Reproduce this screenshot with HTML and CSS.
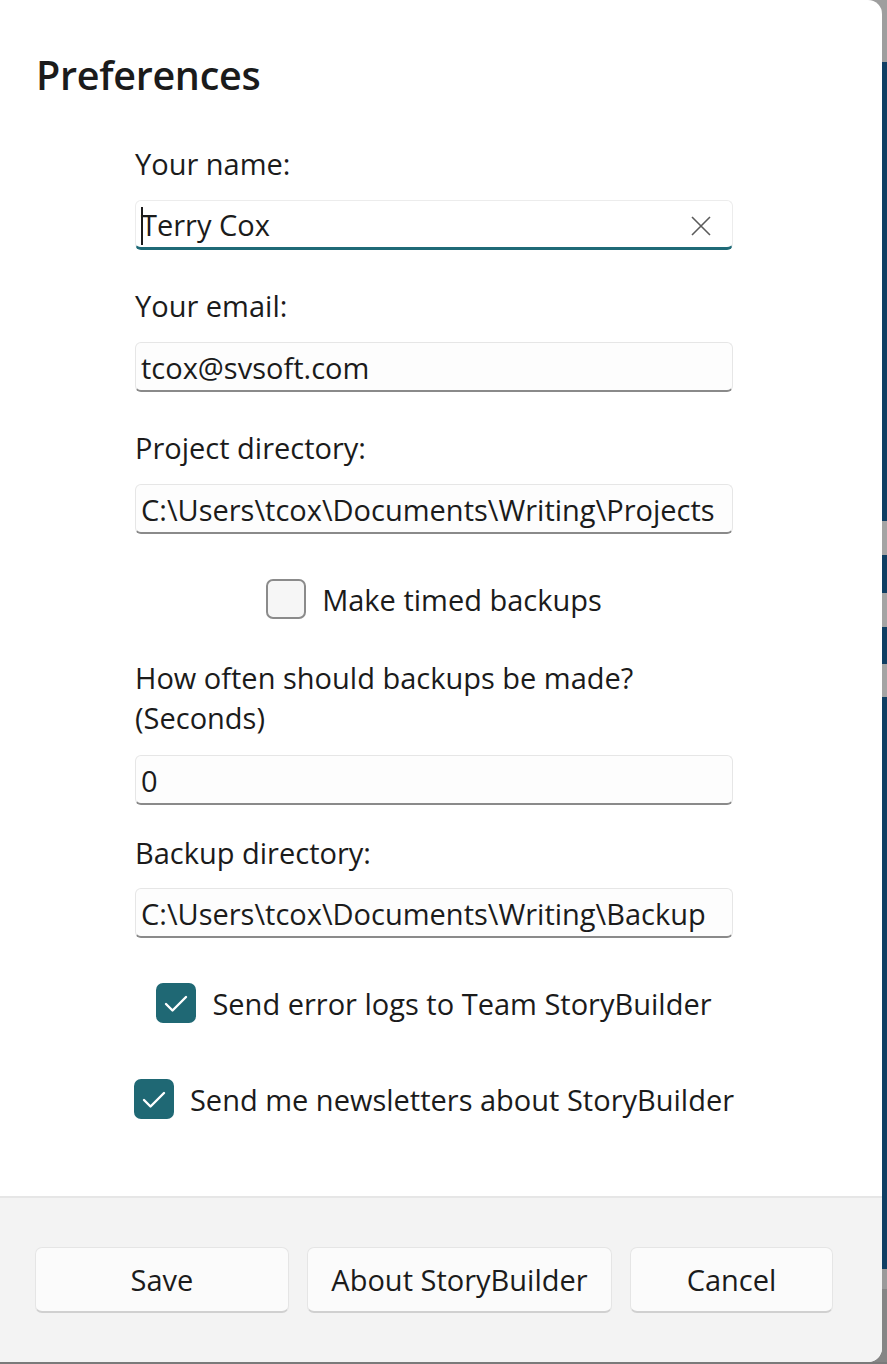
FILE: index.html
```html
<!DOCTYPE html>
<html lang="en">
<head>
<meta charset="utf-8">
<title>Preferences</title>
<link rel="stylesheet" href="styles.css">
</head>
<body>
<div class="screen">
  <div class="dialog">
    <div class="content">
      <h1 class="title">Preferences</h1>
      <div class="form">
        <label class="label l-name">Your name:</label>
        <div class="textbox focused">
          <span class="caret"></span><span class="value">Terry Cox</span>
          <svg class="clear" width="22" height="22" viewBox="0 0 22 22"><path d="M2 2 L20 20 M20 2 L2 20" stroke="#5b5b5b" stroke-width="1.6" fill="none"/></svg>
        </div>
        <label class="label l-gap">Your email:</label>
        <div class="textbox"><span class="value">tcox@svsoft.com</span></div>
        <label class="label l-gap">Project directory:</label>
        <div class="textbox"><span class="value">C:\Users\tcox\Documents\Writing\Projects</span></div>
        <div class="check-row cr-backup">
          <span class="checkbox"></span><span class="check-text">Make timed backups</span>
        </div>
        <label class="label l-often">How often should backups be made?<br>(Seconds)</label>
        <div class="textbox"><span class="value">0</span></div>
        <label class="label l-backup">Backup directory:</label>
        <div class="textbox"><span class="value">C:\Users\tcox\Documents\Writing\Backup</span></div>
        <div class="check-row cr-logs">
          <span class="checkbox checked"><svg width="40" height="40" viewBox="0 0 40 40"><path d="M10 21 L16.5 27.5 L30 14" stroke="#fff" stroke-width="2.4" fill="none" stroke-linecap="round" stroke-linejoin="round"/></svg></span><span class="check-text">Send error logs to Team StoryBuilder</span>
        </div>
        <div class="check-row cr-news">
          <span class="checkbox checked"><svg width="40" height="40" viewBox="0 0 40 40"><path d="M10 21 L16.5 27.5 L30 14" stroke="#fff" stroke-width="2.4" fill="none" stroke-linecap="round" stroke-linejoin="round"/></svg></span><span class="check-text">Send me newsletters about StoryBuilder</span>
        </div>
      </div>
    </div>
    <div class="footer">
      <button class="btn btn-save">Save</button>
      <button class="btn btn-about">About StoryBuilder</button>
      <button class="btn btn-cancel">Cancel</button>
    </div>
  </div>
</div>
</body>
</html>
```
FILE: styles.css
```css
* { box-sizing: border-box; }
html, body { margin: 0; padding: 0; }
body {
  width: 887px;
  height: 1364px;
  overflow: hidden;
  font-family: "Open Sans", "Noto Sans", sans-serif;
  color: #1b1b1b;
}
.screen {
  width: 887px;
  height: 1364px;
  display: flex;
  align-items: flex-start;
  background:
    linear-gradient(to bottom,
      #9e9e9e 0 62px,
      #0f3e63 62px 521px,
      #a4a4a4 521px 555px,
      #0f3e63 555px 593px,
      #a4a4a4 593px 627px,
      #0f3e63 627px 664px,
      #a4a4a4 664px 697px,
      #0f3e63 697px 1269px,
      #9a9a9a 1269px 1289px,
      #858585 1289px 1362px,
      #7a7a7a 1362px 1364px);
}
.dialog {
  width: 882px;
  height: 1362px;
  background: #ffffff;
  border-radius: 0 14px 14px 0;
  overflow: hidden;
  display: flex;
  flex-direction: column;
}
.content {
  flex: 1;
  padding: 0 0 0 36px;
}
.title {
  margin: 0;
  padding-top: 45px;
  font-size: 39.5px;
  font-weight: 600;
  line-height: 60px;
  letter-spacing: -0.3px;
}
.form {
  width: 598px;
  margin-left: 99px;
  display: flex;
  flex-direction: column;
  font-size: 29px;
}
.label {
  display: block;
  line-height: 40px;
  margin-bottom: 16px;
}
.l-name { margin-top: 39px; }
.l-gap { margin-top: 36px; }
.l-often { margin-top: 39px; margin-bottom: 17px; }
.l-backup { margin-top: 28px; margin-bottom: 15px; }
.textbox {
  position: relative;
  height: 50px;
  border: 1px solid #e6e6e6;
  border-bottom: 2px solid #8a8a8a;
  border-radius: 6px;
  background: #fdfdfd;
  display: flex;
  align-items: center;
  padding: 2px 0 0 5px;
  line-height: 40px;
  white-space: nowrap;
  overflow: hidden;
}
.textbox.focused {
  border-color: #ececec;
  border-bottom: 3px solid #1f6a77;
  background: #ffffff;
}
.caret {
  position: absolute;
  left: 5px;
  top: 6px;
  width: 2px;
  height: 38px;
  background: #1b1b1b;
}
.clear {
  position: absolute;
  right: 20px;
  top: 14px;
}
.check-row {
  display: flex;
  align-items: center;
  justify-content: center;
  height: 40px;
  gap: 16px;
  margin-top: 45px;
}
.cr-news { margin-top: 56px; }
.cr-backup { margin-top: 45px; }
.checkbox {
  width: 40px;
  height: 40px;
  flex: none;
  border-radius: 7px;
  border: 2px solid #8b8b8b;
  background: #f6f6f6;
  display: flex;
  align-items: center;
  justify-content: center;
}
.checkbox.checked {
  border: none;
  background: #1f6874;
}
.check-text {
  line-height: 40px;
  padding-top: 2px;
  white-space: nowrap;
}
.footer {
  height: 166px;
  border-top: 2px solid #e6e6e6;
  background: #f3f3f3;
  display: flex;
  gap: 18px;
  padding: 49px 0 0 35px;
}
.btn {
  height: 66px;
  font-family: inherit;
  font-size: 29px;
  color: #1b1b1b;
  background: #fbfbfb;
  border: 1px solid #e5e5e5;
  border-bottom: 2px solid #d0d0d0;
  border-radius: 7px;
  padding: 0;
}
.btn-save { width: 254px; }
.btn-about { width: 305px; }
.btn-cancel { width: 203px; }
```
